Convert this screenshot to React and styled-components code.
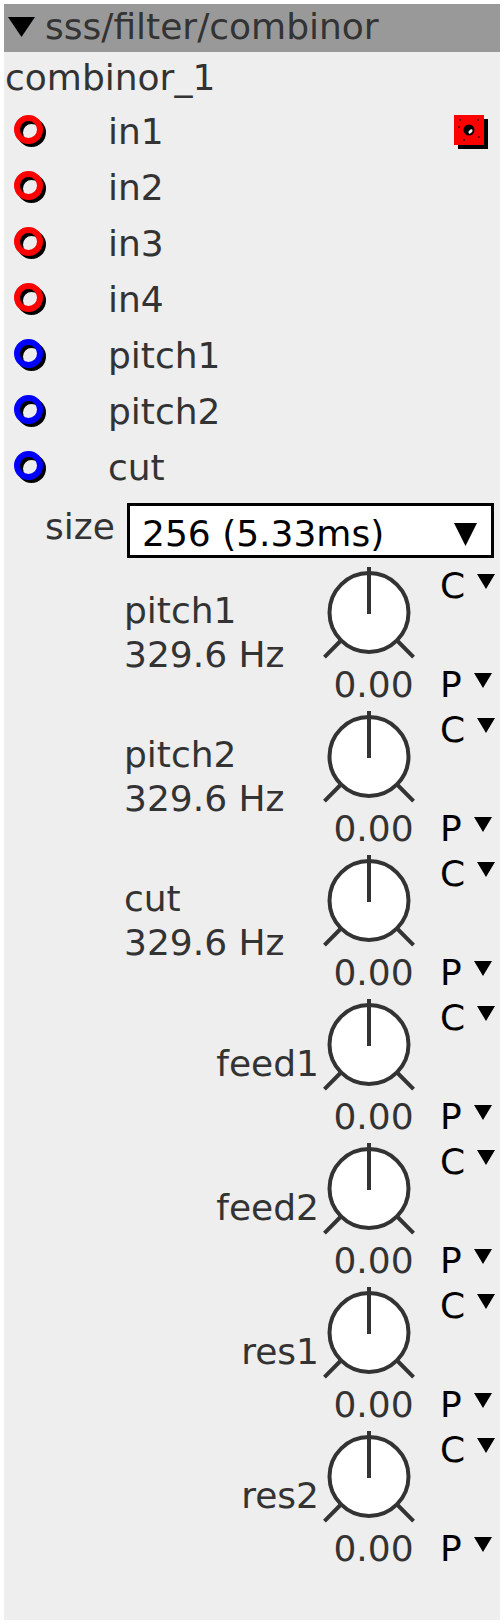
import React from "react";
import styled, { createGlobalStyle } from "styled-components";

const GlobalStyle = createGlobalStyle`
  body {
    margin: 4px;
    background: #fff;
    font-family: "DejaVu Sans", sans-serif;
  }
`;

const Panel = styled.div`
  width: 496px;
  height: 1616px;
  background: #eeeeee;
  color: #333;
  font-size: 36px;
  line-height: 42px;
`;

const Header = styled.div`
  height: 48px;
  background: #999999;
  display: flex;
  align-items: center;
  padding-left: 4px;
  gap: 10px;
  line-height: 48px;
`;

const Title = styled.div`
  padding-bottom: 2px;
`;

const Name = styled.div`
  height: 52px;
  line-height: 52px;
  padding-left: 1px;
`;

const PortRow = styled.div`
  height: 56px;
  display: flex;
  align-items: center;
  line-height: 56px;
`;

const PortIconCell = styled.div`
  width: 96px;
  padding-left: 8px;
  display: flex;
  align-items: center;
`;

const PortLabel = styled.div`
  flex: 1;
`;

const OutBox = styled.div`
  margin-right: 11px;
  display: flex;
`;

const SizeRow = styled.div`
  display: flex;
  align-items: flex-start;
  margin-top: 7px;
`;

const SizeLabel = styled.div`
  margin-left: 41px;
  width: 82px;
  padding-top: 3px;
`;

const Select = styled.div`
  flex: 1;
  margin-right: 6px;
  height: 42px;
  border: 3px solid #000;
  background: #fff;
  color: #000;
  display: flex;
  align-items: flex-start;
  padding: 7px 14px 0 12px;
  box-sizing: content-box;
`;

const SelectText = styled.div`
  flex: 1;
`;

const SelectArrow = styled.div`
  padding-top: 10px;
  display: flex;
`;

const Knobs = styled.div`
  margin-top: 7px;
`;

const KnobRow = styled.div`
  height: 144px;
  display: flex;
  align-items: flex-start;
`;

const LabelCol = styled.div`
  margin-left: 120px;
  width: 195px;
  display: flex;
  justify-content: ${(p) => (p.$single ? "flex-end" : "flex-start")};
  padding-top: ${(p) => (p.$single ? "45px" : "24px")};
  line-height: 44px;
`;

const KnobCol = styled.div`
  width: 102px;
  margin-left: -1px;
  display: flex;
  flex-direction: column;
  align-items: center;
`;

const Value = styled.div`
  line-height: 44px;
  margin-top: 2px;
  padding-left: 9px;
`;

const CpCol = styled.div`
  margin-left: 20px;
  height: 144px;
  display: flex;
  flex-direction: column;
  justify-content: space-between;
  color: #000;
`;

const CpItem = styled.div`
  display: flex;
  align-items: flex-start;
  gap: 12px;
  line-height: 44px;
  margin-top: ${(p) => (p.$top ? "-1px" : "0")};
  padding-bottom: ${(p) => (p.$top ? "0" : "2px")};
`;

const SmallTri = styled.svg`
  margin-top: 10px;
`;

const Triangle = ({ w, h, style }) => (
  <svg width={w} height={h} style={style}>
    <polygon points={`0,0 ${w},0 ${w / 2},${h}`} fill="#000" />
  </svg>
);

const Port = ({ color }) => (
  <svg width="40" height="40">
    <circle cx="19.5" cy="20.5" r="11.5" fill="none" stroke="#000" strokeWidth="6" />
    <circle cx="16.5" cy="17.5" r="11.5" fill="none" stroke={color} strokeWidth="6" />
  </svg>
);

const OutPort = () => (
  <svg width="36" height="36">
    <rect x="5" y="5" width="30" height="30" fill="#000" />
    <rect x="1" y="1" width="30" height="30" fill="#f00" />
    <rect x="6" y="6" width="20" height="20" fill="none" stroke="#000" strokeWidth="1" strokeDasharray="2 16" />
    <circle cx="16" cy="16" r="5.5" fill="#000" />
    <ellipse cx="17.5" cy="17.5" rx="2.5" ry="1.5" transform="rotate(-45 17.5 17.5)" fill="#fff" />
  </svg>
);

const Knob = () => {
  const cx = 51;
  const cy = 47.5;
  const leg = (a) => {
    const r = (a * Math.PI) / 180;
    return (
      <line
        x1={cx + Math.cos(r) * 40}
        y1={cy + Math.sin(r) * 40}
        x2={cx + Math.cos(r) * 63}
        y2={cy + Math.sin(r) * 63}
        stroke="#333"
        strokeWidth="4"
      />
    );
  };
  return (
    <svg width="102" height="96">
      {leg(45)}
      {leg(135)}
      <circle cx={cx} cy={cy} r="39.5" fill="#fff" stroke="#333" strokeWidth="4" />
      <line x1={cx} y1="2" x2={cx} y2={cy + 1.5} stroke="#333" strokeWidth="4" />
    </svg>
  );
};

const ports = [
  { name: "in1", color: "#f00", out: true },
  { name: "in2", color: "#f00" },
  { name: "in3", color: "#f00" },
  { name: "in4", color: "#f00" },
  { name: "pitch1", color: "#00f" },
  { name: "pitch2", color: "#00f" },
  { name: "cut", color: "#00f" },
];

const knobs = [
  { label: "pitch1", sub: "329.6 Hz" },
  { label: "pitch2", sub: "329.6 Hz" },
  { label: "cut", sub: "329.6 Hz" },
  { label: "feed1" },
  { label: "feed2" },
  { label: "res1" },
  { label: "res2" },
];

const App = () => {
  return (
    <>
      <GlobalStyle />
      <Panel>
        <Header>
          <Triangle w={27} h={20} style={{ marginTop: -2 }} />
          <Title>sss/filter/combinor</Title>
        </Header>
        <Name>combinor_1</Name>
        {ports.map((p) => (
          <PortRow key={p.name}>
            <PortIconCell>
              <Port color={p.color} />
            </PortIconCell>
            <PortLabel>{p.name}</PortLabel>
            {p.out && (
              <OutBox>
                <OutPort />
              </OutBox>
            )}
          </PortRow>
        ))}
        <SizeRow>
          <SizeLabel>size</SizeLabel>
          <Select>
            <SelectText>256 (5.33ms)</SelectText>
            <SelectArrow>
              <Triangle w={23} h={23} />
            </SelectArrow>
          </Select>
        </SizeRow>
        <Knobs>
          {knobs.map((k) => (
            <KnobRow key={k.label}>
              <LabelCol $single={!k.sub}>
                <div>
                  {k.label}
                  {k.sub && <br />}
                  {k.sub}
                </div>
              </LabelCol>
              <KnobCol>
                <Knob />
                <Value>0.00</Value>
              </KnobCol>
              <CpCol>
                <CpItem $top>
                  C
                  <SmallTri width="18" height="15">
                    <polygon points="0,0 18,0 9,15" fill="#000" />
                  </SmallTri>
                </CpItem>
                <CpItem>
                  P
                  <SmallTri width="18" height="15">
                    <polygon points="0,0 18,0 9,15" fill="#000" />
                  </SmallTri>
                </CpItem>
              </CpCol>
            </KnobRow>
          ))}
        </Knobs>
      </Panel>
    </>
  );
};

export default App;
